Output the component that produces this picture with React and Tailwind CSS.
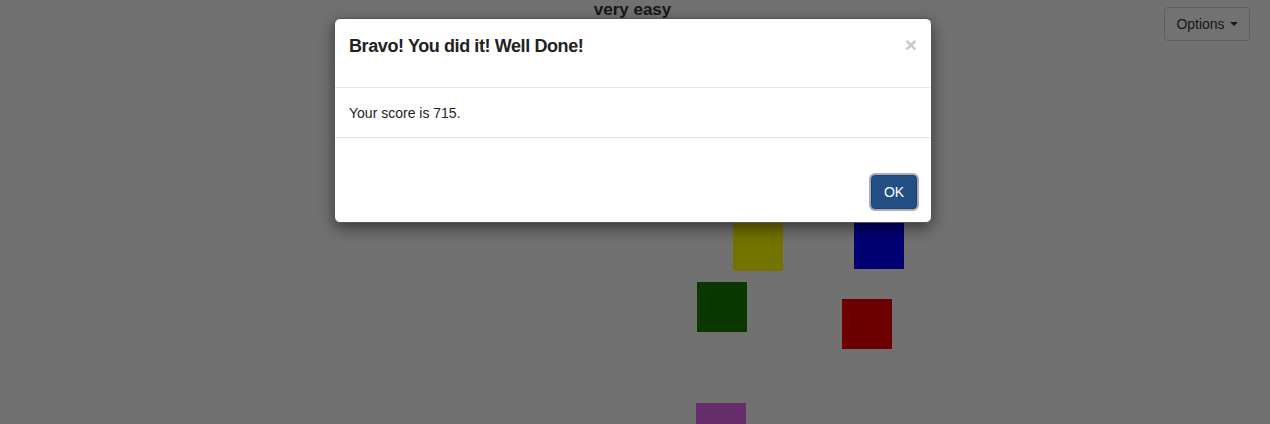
export default function App() {
  const squares = [
    { cls: "left-[733px] top-[221px] bg-[#737300]" },
    { cls: "left-[854px] top-[219px] bg-[#000073]" },
    { cls: "left-[697px] top-[282px] bg-[#0b3800]" },
    { cls: "left-[842px] top-[299px] bg-[#6c0000]" },
    { cls: "left-[696px] top-[403px] bg-[#662d6a]" },
  ];
  return (
    <div
      className="relative w-full h-[424px] overflow-hidden bg-[#717171]"
      style={{ fontFamily: '"Liberation Sans", Arial, sans-serif' }}
    >
      <div className="grid grid-cols-[1fr_auto_1fr]">
        <div />
        <div className="pr-[5px] text-[17px] leading-[20px] font-bold text-[#171717]">
          very easy
        </div>
        <div className="flex justify-end pr-[20px] pt-[7px]">
          <button className="flex items-center h-[34px] w-[86px] justify-center gap-[5px] rounded-[4px] border border-[#5e5e5e] bg-[#727272] text-[14px] text-[#161616]">
            <span>Options</span>
            <span className="w-0 h-0 border-l-[4px] border-r-[4px] border-t-[4px] border-l-transparent border-r-transparent border-t-[#161616]" />
          </button>
        </div>
      </div>

      {squares.map((s, i) => (
        <div key={i} className={`absolute w-[50px] h-[50px] ${s.cls}`} />
      ))}

      <div className="absolute inset-0 flex justify-center pt-[18px]">
        <div className="w-[598px] h-[205px] ml-[-4px] self-start flex flex-col rounded-[6px] bg-white border border-[#555] shadow-[0_5px_15px_rgba(0,0,0,0.5)]">
          <div className="h-[69px] border-b border-[#e5e5e5] flex justify-between items-start pl-[14px] pr-[14px] pt-[14px]">
            <div className="text-[18px] leading-[26px] font-bold tracking-[-0.4px] text-[#222]">
              Bravo! You did it! Well Done!
            </div>
            <div className="text-[21px] leading-[21px] font-bold text-[#c7c7c7] mt-[1px]">×</div>
          </div>
          <div className="h-[50px] border-b border-[#e5e5e5] px-[14px] pt-[15px] text-[14px] leading-[20px] text-[#222]">
            Your score is 715.
          </div>
          <div className="flex-1 flex justify-end items-end pr-[14px] pb-[13px]">
            <button className="h-[34px] w-[46px] rounded-[4px] border border-[#1c3f6e] bg-[#234f87] text-white text-[14px] shadow-[0_0_0_2px_rgba(140,146,160,0.75)]">
              OK
            </button>
          </div>
        </div>
      </div>
    </div>
  );
}
